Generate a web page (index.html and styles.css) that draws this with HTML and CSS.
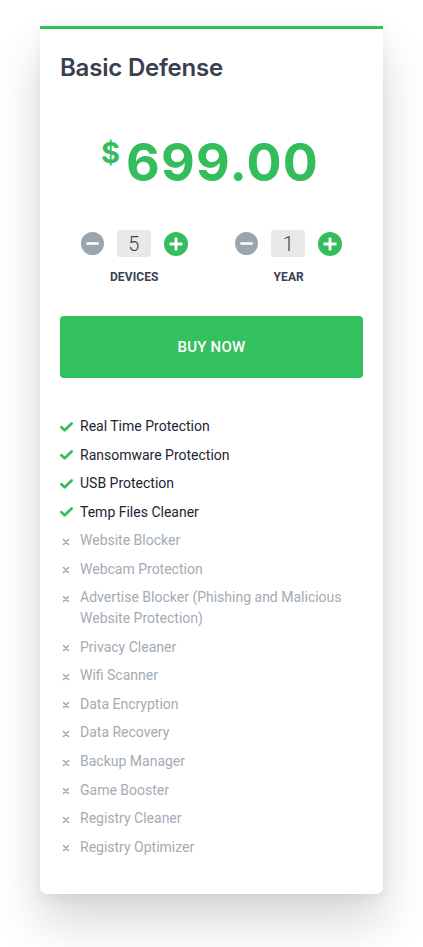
FILE: index.html
```html
<!DOCTYPE html>
<html>
<head>
<meta charset="utf-8">
<link rel="stylesheet" href="styles.css">
</head>
<body>
<div class="card">
  <h2 class="title">Basic Defense</h2>
  <div class="price"><span class="cur">$</span><span class="amount">699.00</span></div>
  <div class="steppers">
    <div class="stepper">
      <div class="controls">
        <span class="btn minus"><svg viewBox="0 0 24 24" width="23" height="23"><circle cx="12" cy="12" r="12" fill="#9aa5ae"/><rect x="5.5" y="10.6" width="13" height="2.8" rx="0.6" fill="#fff"/></svg></span>
        <span class="val">5</span>
        <span class="btn plus"><svg viewBox="0 0 24 24" width="24" height="24"><circle cx="12" cy="12" r="12" fill="#33be5b"/><rect x="5.5" y="10.6" width="13" height="2.8" rx="0.6" fill="#fff"/><rect x="10.6" y="5.5" width="2.8" height="13" rx="0.6" fill="#fff"/></svg></span>
      </div>
      <div class="label">DEVICES</div>
    </div>
    <div class="stepper">
      <div class="controls">
        <span class="btn minus"><svg viewBox="0 0 24 24" width="23" height="23"><circle cx="12" cy="12" r="12" fill="#9aa5ae"/><rect x="5.5" y="10.6" width="13" height="2.8" rx="0.6" fill="#fff"/></svg></span>
        <span class="val">1</span>
        <span class="btn plus"><svg viewBox="0 0 24 24" width="24" height="24"><circle cx="12" cy="12" r="12" fill="#33be5b"/><rect x="5.5" y="10.6" width="13" height="2.8" rx="0.6" fill="#fff"/><rect x="10.6" y="5.5" width="2.8" height="13" rx="0.6" fill="#fff"/></svg></span>
      </div>
      <div class="label">YEAR</div>
    </div>
  </div>
  <button class="buy">BUY NOW</button>
  <ul class="features">
    <li class="on"><span class="ic"><svg viewBox="0 0 13 10" width="13" height="10"><path d="M1.4 5.2 L4.7 8.3 L11.6 1.5" fill="none" stroke="#33be5b" stroke-width="2.7" stroke-linecap="round" stroke-linejoin="round"/></svg></span><span>Real Time Protection</span></li>
    <li class="on"><span class="ic"><svg viewBox="0 0 13 10" width="13" height="10"><path d="M1.4 5.2 L4.7 8.3 L11.6 1.5" fill="none" stroke="#33be5b" stroke-width="2.7" stroke-linecap="round" stroke-linejoin="round"/></svg></span><span>Ransomware Protection</span></li>
    <li class="on"><span class="ic"><svg viewBox="0 0 13 10" width="13" height="10"><path d="M1.4 5.2 L4.7 8.3 L11.6 1.5" fill="none" stroke="#33be5b" stroke-width="2.7" stroke-linecap="round" stroke-linejoin="round"/></svg></span><span>USB Protection</span></li>
    <li class="on"><span class="ic"><svg viewBox="0 0 13 10" width="13" height="10"><path d="M1.4 5.2 L4.7 8.3 L11.6 1.5" fill="none" stroke="#33be5b" stroke-width="2.7" stroke-linecap="round" stroke-linejoin="round"/></svg></span><span>Temp Files Cleaner</span></li>
    <li class="off"><span class="ic"><svg viewBox="0 0 8 8" width="8" height="8"><path d="M1.5 1.5 L6.5 6.5 M6.5 1.5 L1.5 6.5" stroke="#a3abb4" stroke-width="1.6" stroke-linecap="round"/></svg></span><span>Website Blocker</span></li>
    <li class="off"><span class="ic"><svg viewBox="0 0 8 8" width="8" height="8"><path d="M1.5 1.5 L6.5 6.5 M6.5 1.5 L1.5 6.5" stroke="#a3abb4" stroke-width="1.6" stroke-linecap="round"/></svg></span><span>Webcam Protection</span></li>
    <li class="off"><span class="ic"><svg viewBox="0 0 8 8" width="8" height="8"><path d="M1.5 1.5 L6.5 6.5 M6.5 1.5 L1.5 6.5" stroke="#a3abb4" stroke-width="1.6" stroke-linecap="round"/></svg></span><span>Advertise Blocker (Phishing and Malicious Website Protection)</span></li>
    <li class="off"><span class="ic"><svg viewBox="0 0 8 8" width="8" height="8"><path d="M1.5 1.5 L6.5 6.5 M6.5 1.5 L1.5 6.5" stroke="#a3abb4" stroke-width="1.6" stroke-linecap="round"/></svg></span><span>Privacy Cleaner</span></li>
    <li class="off"><span class="ic"><svg viewBox="0 0 8 8" width="8" height="8"><path d="M1.5 1.5 L6.5 6.5 M6.5 1.5 L1.5 6.5" stroke="#a3abb4" stroke-width="1.6" stroke-linecap="round"/></svg></span><span>Wifi Scanner</span></li>
    <li class="off"><span class="ic"><svg viewBox="0 0 8 8" width="8" height="8"><path d="M1.5 1.5 L6.5 6.5 M6.5 1.5 L1.5 6.5" stroke="#a3abb4" stroke-width="1.6" stroke-linecap="round"/></svg></span><span>Data Encryption</span></li>
    <li class="off"><span class="ic"><svg viewBox="0 0 8 8" width="8" height="8"><path d="M1.5 1.5 L6.5 6.5 M6.5 1.5 L1.5 6.5" stroke="#a3abb4" stroke-width="1.6" stroke-linecap="round"/></svg></span><span>Data Recovery</span></li>
    <li class="off"><span class="ic"><svg viewBox="0 0 8 8" width="8" height="8"><path d="M1.5 1.5 L6.5 6.5 M6.5 1.5 L1.5 6.5" stroke="#a3abb4" stroke-width="1.6" stroke-linecap="round"/></svg></span><span>Backup Manager</span></li>
    <li class="off"><span class="ic"><svg viewBox="0 0 8 8" width="8" height="8"><path d="M1.5 1.5 L6.5 6.5 M6.5 1.5 L1.5 6.5" stroke="#a3abb4" stroke-width="1.6" stroke-linecap="round"/></svg></span><span>Game Booster</span></li>
    <li class="off"><span class="ic"><svg viewBox="0 0 8 8" width="8" height="8"><path d="M1.5 1.5 L6.5 6.5 M6.5 1.5 L1.5 6.5" stroke="#a3abb4" stroke-width="1.6" stroke-linecap="round"/></svg></span><span>Registry Cleaner</span></li>
    <li class="off"><span class="ic"><svg viewBox="0 0 8 8" width="8" height="8"><path d="M1.5 1.5 L6.5 6.5 M6.5 1.5 L1.5 6.5" stroke="#a3abb4" stroke-width="1.6" stroke-linecap="round"/></svg></span><span>Registry Optimizer</span></li>
  </ul>
</div>
</body>
</html>
```

FILE: styles.css
```css
* { box-sizing: border-box; }
html, body { margin: 0; padding: 0; background: #fff; }
html { min-height: 100%; }
body {
  font-family: Roboto, "Liberation Sans", sans-serif;
  padding: 26px 0 60px 40px;
}
.card {
  width: 343px;
  background: #fff;
  border-top: 3px solid #33be5b;
  border-radius: 0 0 7px 7px;
  box-shadow: 0 28px 50px rgba(0,0,0,0.16), 0 4px 14px rgba(0,0,0,0.06);
  padding: 22px 20px 36px 20px;
}
.title {
  margin: 0;
  font-family: Inter, Roboto, sans-serif;
  font-weight: 600;
  font-size: 24px;
  line-height: 34px;
  color: #38404f;
  letter-spacing: -0.2px;
}
.price {
  display: flex;
  justify-content: center;
  align-items: flex-start;
  margin-top: 55px;
  color: #33be5b;
  font-family: Inter, Roboto, sans-serif;
  font-weight: 700;
  padding-right: 3px;
}
.cur {
  font-size: 29px;
  line-height: 30px;
  margin-top: -2px;
  margin-right: 6px;
}
.amount {
  font-size: 52px;
  line-height: 52px;
  letter-spacing: 1.2px;
  margin-top: -3px;
}
.steppers {
  display: grid;
  grid-template-columns: 1fr 1fr;
  margin-top: 41px;
}
.stepper {
  display: flex;
  flex-direction: column;
  align-items: center;
}
.stepper:first-child { margin-left: -3px; }
.stepper:last-child { margin-left: 3px; }
.controls {
  display: flex;
  align-items: center;
  gap: 13px;
}
.btn { display: flex; }
.btn svg { display: block; }
.val {
  width: 34px;
  height: 27px;
  background: #e8e8e8;
  border-radius: 3px;
  display: flex;
  align-items: center;
  justify-content: center;
  font-size: 20px;
  color: #444;
  font-weight: 300;
}
.label {
  margin-top: 13px;
  font-size: 12px;
  font-weight: 700;
  color: #3a4252;
  letter-spacing: 0.1px;
  line-height: 14px;
}
.buy {
  display: block;
  width: 100%;
  height: 62px;
  margin-top: 32px;
  border: none;
  border-radius: 4px;
  background: #33c05e;
  color: #fff;
  font-family: Roboto, sans-serif;
  font-size: 15px;
  font-weight: 500;
  letter-spacing: 0.2px;
}
.features {
  list-style: none;
  margin: 38px 0 0 0;
  padding: 0;
}
.features li {
  display: flex;
  align-items: flex-start;
  font-size: 14px;
  line-height: 21px;
  margin-bottom: 7.55px;
}
.features li:last-child { margin-bottom: 0; }
.ic {
  width: 20px;
  flex: none;
  height: 21px;
  display: flex;
  align-items: center;
}
.on { color: #1d2533; }
.off { color: #a3abb4; }
.off .ic { padding-left: 2px; padding-top: 2px; }
```
